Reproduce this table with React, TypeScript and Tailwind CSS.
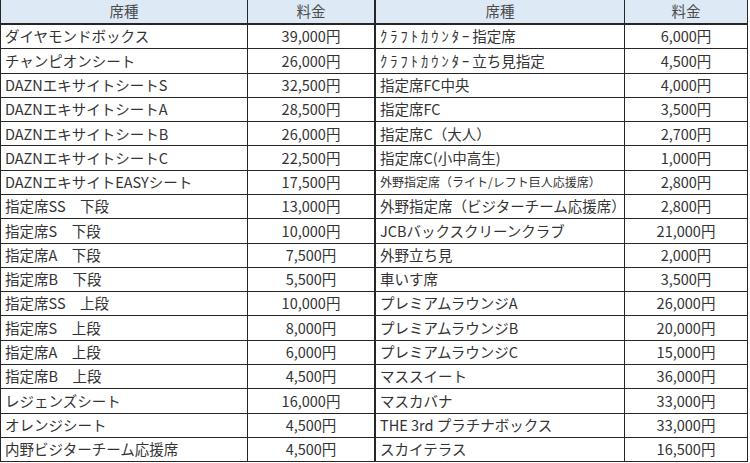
const LEFT_ROWS = [
  { name: "ダイヤモンドボックス", price: "39,000円" },
  { name: "チャンピオンシート", price: "26,000円" },
  { name: "DAZNエキサイトシートS", price: "32,500円" },
  { name: "DAZNエキサイトシートA", price: "28,500円" },
  { name: "DAZNエキサイトシートB", price: "26,000円" },
  { name: "DAZNエキサイトシートC", price: "22,500円" },
  { name: "DAZNエキサイトEASYシート", price: "17,500円" },
  { name: "指定席SS　下段", price: "13,000円" },
  { name: "指定席S　下段", price: "10,000円" },
  { name: "指定席A　下段", price: "7,500円" },
  { name: "指定席B　下段", price: "5,500円" },
  { name: "指定席SS　上段", price: "10,000円" },
  { name: "指定席S　上段", price: "8,000円" },
  { name: "指定席A　上段", price: "6,000円" },
  { name: "指定席B　上段", price: "4,500円" },
  { name: "レジェンズシート", price: "16,000円" },
  { name: "オレンジシート", price: "4,500円" },
  { name: "内野ビジターチーム応援席", price: "4,500円" },
];

const RIGHT_ROWS = [
  { name: "指定席", kana: "ｸﾗﾌﾄｶｳﾝﾀｰ", price: "6,000円" },
  { name: "立ち見指定", kana: "ｸﾗﾌﾄｶｳﾝﾀｰ", price: "4,500円" },
  { name: "指定席FC中央", price: "4,000円" },
  { name: "指定席FC", price: "3,500円" },
  { name: "指定席C（大人）", price: "2,700円" },
  { name: "指定席C(小中高生)", price: "1,000円" },
  { name: "外野指定席（ライト/レフト巨人応援席）", price: "2,800円", small: true },
  { name: "外野指定席（ビジターチーム応援席）", price: "2,800円" },
  { name: "JCBバックスクリーンクラブ", price: "21,000円" },
  { name: "外野立ち見", price: "2,000円" },
  { name: "車いす席", price: "3,500円" },
  { name: "プレミアムラウンジA", price: "26,000円" },
  { name: "プレミアムラウンジB", price: "20,000円" },
  { name: "プレミアムラウンジC", price: "15,000円" },
  { name: "マススイート", price: "36,000円" },
  { name: "マスカバナ", price: "33,000円" },
  { name: "THE 3rd プラチナボックス", price: "33,000円" },
  { name: "スカイテラス", price: "16,500円" },
];

type Row = { name: string; price: string; kana?: string; small?: boolean };

function PriceTable({ rows, nameCol, priceCol }: { rows: Row[]; nameCol: string; priceCol: string }) {
  return (
    <div className="flex flex-col h-[462px] border-l border-[#262626]">
      {/* header */}
      <div className="flex h-[25px] shrink-0 bg-[#dde9f5] border-b-2 border-[#262626] text-[#4a4a4a]">
        <div className={`${nameCol} flex items-center justify-center border-r border-[#262626]`}>席種</div>
        <div className={`${priceCol} flex items-center justify-center border-r border-[#262626]`}>料金</div>
      </div>
      {rows.map((row) => (
        <div key={row.name + row.price} className="flex flex-1 border-b border-[#262626]">
          <div
            className={`${nameCol} flex items-center pl-[4px] border-r border-[#262626] whitespace-nowrap overflow-hidden ${
              row.small ? "text-[12px]" : ""
            }`}
          >
            {row.kana && <span className="tracking-[3px]">{row.kana}</span>}
            {row.name}
          </div>
          <div className={`${priceCol} flex items-center justify-center border-r border-[#262626]`}>{row.price}</div>
        </div>
      ))}
    </div>
  );
}

export default function App() {
  return (
    <div
      className="flex w-[750px] h-[463px] bg-white text-[14.5px] leading-none text-[#333333] overflow-hidden"
      style={{ fontFamily: '"Noto Sans CJK JP", "Noto Sans", sans-serif' }}
    >
      <PriceTable rows={LEFT_ROWS} nameCol="w-[247px]" priceCol="w-[127px]" />
      <PriceTable rows={RIGHT_ROWS} nameCol="w-[249px]" priceCol="w-[123px]" />
    </div>
  );
}
